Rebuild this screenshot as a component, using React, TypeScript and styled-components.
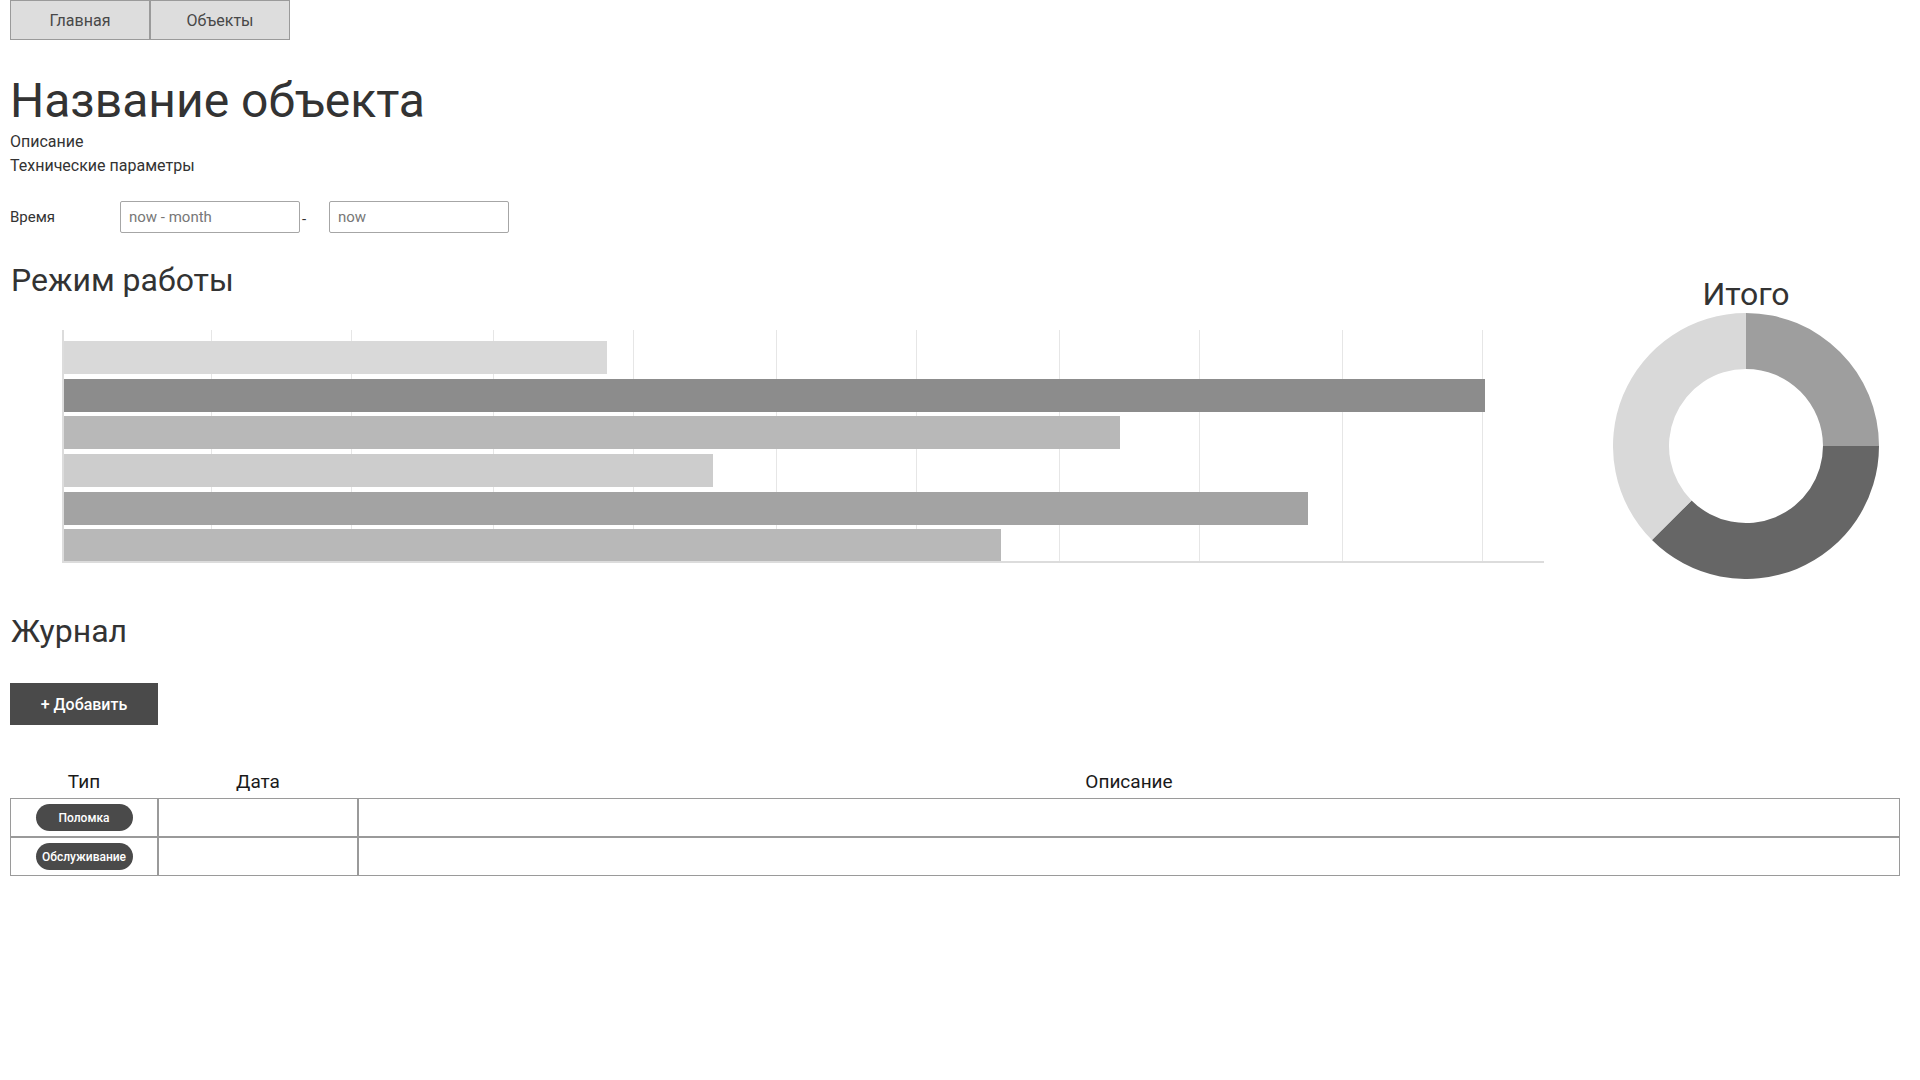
import React from "react";
import styled, { createGlobalStyle } from "styled-components";

const GlobalStyle = createGlobalStyle`
  * { box-sizing: border-box; }
  html, body { margin: 0; padding: 0; background: #fff; }
  body { font-family: Roboto, "Noto Sans", Arial, sans-serif; color: #333; }
`;

const Page = styled.div`
  padding: 0 20px 40px 10px;
  display: flex;
  flex-direction: column;
`;

const Nav = styled.nav`
  display: flex;
`;

const NavButton = styled.button`
  width: 140px;
  height: 40px;
  background: #dddddd;
  border: 1px solid #9a9a9a;
  border-radius: 0;
  font-family: Roboto, Arial, sans-serif;
  font-size: 16px;
  color: #484848;
  padding: 0;
  cursor: pointer;
`;

const Title = styled.h1`
  margin: 32px 0 0;
  font-size: 48px;
  line-height: 58px;
  font-weight: 400;
  color: #333;
`;

const Info = styled.div`
  display: flex;
  flex-direction: column;
`;

const InfoLine = styled.div`
  font-size: 16px;
  line-height: 24px;
  color: #333;
`;

const TimeRow = styled.div`
  margin-top: 23px;
  display: flex;
  align-items: center;
  height: 32px;
`;

const TimeLabel = styled.span`
  width: 110px;
  font-size: 15px;
  color: #333;
`;

const TimeInput = styled.input`
  width: 180px;
  height: 32px;
  border: 1px solid #a6a6a6;
  border-radius: 2px;
  padding: 0 8px;
  font-family: Roboto, Arial, sans-serif;
  font-size: 15px;
  color: #333;
  outline: none;
  &::placeholder { color: #777; }
`;

const Dash = styled.span`
  width: 29px;
  padding-left: 2px;
  padding-top: 4px;
  font-size: 15px;
  color: #333;
`;

const ChartRow = styled.div`
  margin-top: 28px;
  display: flex;
`;

const ChartColumn = styled.div`
  flex: 1;
  display: flex;
  flex-direction: column;
`;

const SectionTitle = styled.h2`
  margin: 0;
  font-size: 32px;
  line-height: 38px;
  font-weight: 400;
  color: #333;
  padding-left: 1px;
`;

const ChartBox = styled.div`
  margin-top: 29px;
  height: 235px;
`;

const TotalColumn = styled.div`
  width: 308px;
  padding-top: 14px;
  display: flex;
  flex-direction: column;
  align-items: center;
`;

const TotalTitle = styled.h2`
  margin: 0;
  font-size: 32px;
  line-height: 38px;
  font-weight: 400;
  color: #333;
`;

const JournalTitle = styled(SectionTitle)`
  margin-top: 33px;
`;

const AddButton = styled.button`
  margin-top: 33px;
  width: 148px;
  height: 42px;
  background: #4a4a4a;
  border: none;
  border-radius: 0;
  color: #fff;
  font-family: Roboto, Arial, sans-serif;
  font-size: 16px;
  font-weight: 500;
  cursor: pointer;
`;

const Table = styled.table`
  margin-top: 43px;
  width: 1890px;
  border-collapse: separate;
  border-spacing: 0;
  table-layout: fixed;
`;

const HeadCell = styled.th`
  height: 30px;
  padding: 0 0 5px;
  vertical-align: bottom;
  font-size: 19px;
  line-height: 22px;
  font-weight: 400;
  color: #1a1a1a;
  text-align: center;
`;

const Cell = styled.td`
  height: 39px;
  border: 1px solid #9a9a9a;
  padding: 0;
  text-align: center;
  vertical-align: middle;
`;

const Pill = styled.span`
  display: inline-flex;
  align-items: center;
  justify-content: center;
  width: 97px;
  height: 27px;
  border-radius: 14px;
  background: #4a4a4a;
  color: #fff;
  font-size: 12px;
  font-weight: 500;
  white-space: nowrap;
`;

const gridXs = [53, 201, 341, 483, 623, 766, 906, 1049, 1189, 1332, 1472];
const bars = [
  { end: 607, color: "#d9d9d9" },
  { end: 1485, color: "#8c8c8c" },
  { end: 1120, color: "#b8b8b8" },
  { end: 713, color: "#cdcdcd" },
  { end: 1308, color: "#a3a3a3" },
  { end: 1001, color: "#b8b8b8" },
];
const barYs = [13, 51, 88, 126, 164, 201];

function BarChart() {
  return (
    <svg width="1550" height="235" viewBox="0 0 1550 235">
      {gridXs.map((x) => (
        <line key={x} x1={x + 0.5} x2={x + 0.5} y1={2} y2={234} stroke="#e6e6e6" strokeWidth={1} />
      ))}
      {bars.map((b, i) => (
        <rect key={i} x={53} y={barYs[i]} width={b.end - 10 - 53} height={33} fill={b.color} />
      ))}
      <line x1={53} x2={53} y1={2} y2={235} stroke="#dcdcdc" strokeWidth={2} />
      <line x1={52} x2={1534} y1={234} y2={234} stroke="#dcdcdc" strokeWidth={2} />
    </svg>
  );
}

function segPath(cx: number, cy: number, r0: number, r1: number, a0: number, a1: number) {
  const rad = (a: number) => (a * Math.PI) / 180;
  const pt = (r: number, a: number) => [cx + r * Math.sin(rad(a)), cy - r * Math.cos(rad(a))];
  const large = a1 - a0 > 180 ? 1 : 0;
  const [ox0, oy0] = pt(r1, a0);
  const [ox1, oy1] = pt(r1, a1);
  const [ix1, iy1] = pt(r0, a1);
  const [ix0, iy0] = pt(r0, a0);
  return `M${ox0},${oy0} A${r1},${r1} 0 ${large} 1 ${ox1},${oy1} L${ix1},${iy1} A${r0},${r0} 0 ${large} 0 ${ix0},${iy0} Z`;
}

const segments = [
  { from: 0, to: 90, color: "#9e9e9e" },
  { from: 90, to: 225, color: "#666666" },
  { from: 225, to: 359.999, color: "#d9d9d9" },
];

function Donut() {
  return (
    <svg width="266" height="266" viewBox="0 0 266 266">
      {segments.map((s, i) => (
        <path key={i} d={segPath(133, 133, 77, 133, s.from, s.to)} fill={s.color} />
      ))}
    </svg>
  );
}

const rows = ["Поломка", "Обслуживание"];

export default function App() {
  return (
    <>
      <GlobalStyle />
      <Page>
        <Nav>
          <NavButton>Главная</NavButton>
          <NavButton>Объекты</NavButton>
        </Nav>
        <Title>Название объекта</Title>
        <Info>
          <InfoLine>Описание</InfoLine>
          <InfoLine>Технические параметры</InfoLine>
        </Info>
        <TimeRow>
          <TimeLabel>Время</TimeLabel>
          <TimeInput placeholder="now - month" />
          <Dash>-</Dash>
          <TimeInput placeholder="now" />
        </TimeRow>
        <ChartRow>
          <ChartColumn>
            <SectionTitle>Режим работы</SectionTitle>
            <ChartBox>
              <BarChart />
            </ChartBox>
          </ChartColumn>
          <TotalColumn>
            <TotalTitle>Итого</TotalTitle>
            <Donut />
          </TotalColumn>
        </ChartRow>
        <JournalTitle>Журнал</JournalTitle>
        <div>
          <AddButton>+ Добавить</AddButton>
        </div>
        <Table>
          <colgroup>
            <col style={{ width: 148 }} />
            <col style={{ width: 200 }} />
            <col />
          </colgroup>
          <thead>
            <tr>
              <HeadCell>Тип</HeadCell>
              <HeadCell>Дата</HeadCell>
              <HeadCell>Описание</HeadCell>
            </tr>
          </thead>
          <tbody>
            {rows.map((r) => (
              <tr key={r}>
                <Cell>
                  <Pill>{r}</Pill>
                </Cell>
                <Cell />
                <Cell />
              </tr>
            ))}
          </tbody>
        </Table>
      </Page>
    </>
  );
}
